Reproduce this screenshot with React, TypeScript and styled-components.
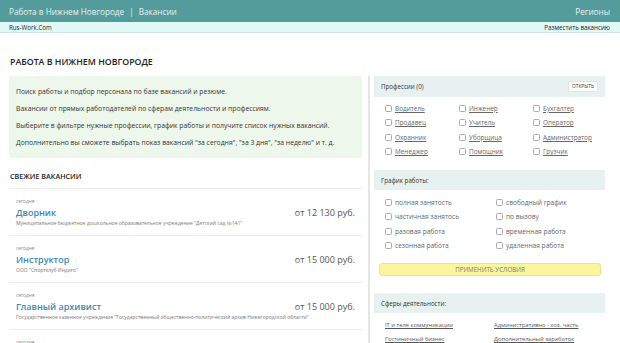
import React from "react";
import styled, { createGlobalStyle } from "styled-components";

const Global = createGlobalStyle`
  html, body { margin: 0; padding: 0; background: #fff; }
  body { font-family: "Open Sans", "Liberation Sans", sans-serif; color: #333; width: 620px; overflow: hidden; }
  * { box-sizing: border-box; }
`;

const TopBar = styled.header`
  height: 22px;
  background: #549c9b;
  display: flex;
  align-items: center;
  justify-content: space-between;
  padding: 0 10px 0 9px;
  color: #e4f2f1;
  font-size: 8.2px;
`;

const Brand = styled.div`
  display: flex;
  gap: 5px;
  align-items: center;
`;

const SubBar = styled.div`
  height: 11px;
  background: #e1f9f6;
  border-bottom: 1px solid #cde3e1;
  display: flex;
  align-items: center;
  justify-content: space-between;
  padding: 0 10px 0 9px;
  font-size: 6.2px;
  color: #222;
`;

const Page = styled.main`
  padding: 0 9px;
`;

const PageTitle = styled.h1`
  margin: 23px 0 8px 1px;
  font-size: 8.8px;
  line-height: 12px;
  font-weight: 600;
  color: #222;
`;

const Columns = styled.div`
  display: flex;
  align-items: flex-start;
`;

const LeftCol = styled.section`
  width: 353px;
  flex: none;
`;

const InfoBox = styled.div`
  background: #eef7eb;
  border-radius: 2px;
  padding: 7px 7px;
`;

const InfoLine = styled.p`
  margin: 0;
  font-size: 6.8px;
  line-height: 17px;
  color: #333;
`;

const SectionTitle = styled.h2`
  margin: 12px 0 0 0;
  padding: 0 0 6px 1px;
  font-size: 7.2px;
  line-height: 12px;
  font-weight: 600;
  color: #222;
  border-bottom: 1px solid #ececec;
`;

const Vacancy = styled.div`
  padding: 9px 7px 8px 7px;
  border-bottom: 1px solid #ececec;
`;

const VacDate = styled.div`
  font-size: 4.8px;
  line-height: 7px;
  color: #888;
`;

const VacRow = styled.div`
  display: flex;
  justify-content: space-between;
  align-items: center;
  height: 14px;
`;

const VacTitle = styled.a`
  font-size: 9px;
  font-weight: 600;
  color: #3d87b3;
  text-decoration: none;
`;

const Salary = styled.span`
  font-size: 9px;
  color: #555;
`;

const Company = styled.div`
  font-size: 5px;
  line-height: 8px;
  color: #777;
`;

const Separator = styled.div`
  width: 2px;
  align-self: stretch;
  background: #e6e6e6;
  margin-left: 6px;
  min-height: 300px;
`;

const Side = styled.aside`
  width: 231px;
  margin-left: 4px;
  flex: none;
`;

const PanelHead = styled.div<{ $h: number; $mt?: number }>`
  height: ${(p) => p.$h}px;
  margin-top: ${(p) => p.$mt ?? 0}px;
  background: #e6f1f0;
  display: flex;
  align-items: center;
  justify-content: space-between;
  padding: 0 7px;
  font-size: 6.2px;
  color: #333;
`;

const OpenBtn = styled.span`
  background: #fff;
  border: 1px solid #e2e2e2;
  border-radius: 2px;
  font-size: 4.8px;
  padding: 2px 3px;
  color: #333;
  line-height: 5px;
`;

const Grid = styled.div<{ $cols: string; $row: number; $pt: number; $pb: number }>`
  display: grid;
  grid-template-columns: ${(p) => p.$cols};
  grid-auto-rows: ${(p) => p.$row}px;
  padding: ${(p) => p.$pt}px 0 ${(p) => p.$pb}px 11px;
`;

const Check = styled.label<{ $link?: boolean }>`
  display: flex;
  align-items: center;
  gap: 3px;
  font-size: ${(p) => (p.$link ? 6.4 : 6.6)}px;
  color: #666;
  text-decoration: ${(p) => (p.$link ? "underline" : "none")};
  white-space: nowrap;
`;

const Box = styled.span`
  width: 7px;
  height: 7px;
  border: 1px solid #a8a8a8;
  border-radius: 1.5px;
  background: #fff;
  flex: none;
`;

const ApplyBtn = styled.div`
  margin: 10px 4px 0 5px;
  height: 13px;
  background: #fbf69d;
  border: 1px solid #ebe38c;
  border-radius: 3px;
  display: flex;
  align-items: center;
  justify-content: center;
  font-size: 6.2px;
  color: #777;
`;

const SphereLink = styled.a`
  font-size: 5.8px;
  color: #555;
  text-decoration: underline;
  display: flex;
  align-items: center;
  white-space: nowrap;
`;

const professions = [
  "Водитель", "Инженер", "Бухгалтер",
  "Продавец", "Учитель", "Оператор",
  "Охранник", "Уборщица", "Администратор",
  "Менеджер", "Помощник", "Грузчик",
];

const schedules = [
  "полная занятость", "свободный график",
  "частичная занятось", "по вызову",
  "разовая работа", "временная работа",
  "сезонная работа", "удаленная работа",
];

const spheres = [
  "IT и теле коммуникации", "Административно - хоз. часть",
  "Гостиничный бизнес", "Дополнительный заработок",
];

const vacancies = [
  { title: "Дворник", salary: "от 12 130 руб.", company: "Муниципальное бюджетное дошкольное образовательное учреждение \"Детский сад №141\"" },
  { title: "Инструктор", salary: "от 15 000 руб.", company: "ООО \"Спортклуб Индиго\"" },
  { title: "Главный архивист", salary: "от 15 000 руб.", company: "Государственное казенное учреждение \"Государственный общественно-политический архив Нижегородской области\"" },
  { title: "Кладовщик", salary: "от 20 000 руб.", company: "ООО \"Склад\"" },
];

export default function App() {
  return (
    <>
      <Global />
      <TopBar>
        <Brand>
          <span>Работа в Нижнем Новгороде</span>
          <span>|</span>
          <span>Вакансии</span>
        </Brand>
        <span>Регионы</span>
      </TopBar>
      <SubBar>
        <span>Rus-Work.Com</span>
        <span>Разместить вакансию</span>
      </SubBar>
      <Page>
        <PageTitle>РАБОТА В НИЖНЕМ НОВГОРОДЕ</PageTitle>
        <Columns>
          <LeftCol>
            <InfoBox>
              <InfoLine>Поиск работы и подбор персонала по базе вакансий и резюме.</InfoLine>
              <InfoLine>Вакансии от прямых работодателей по сферам деятельности и профессиям.</InfoLine>
              <InfoLine>Выберите в фильтре нужные профессии, график работы и получите список нужных вакансий.</InfoLine>
              <InfoLine>Дополнительно вы сможете выбрать показ вакансий "за сегодня", "за 3 дня", "за неделю" и т. д.</InfoLine>
            </InfoBox>
            <SectionTitle>СВЕЖИЕ ВАКАНСИИ</SectionTitle>
            {vacancies.map((v) => (
              <Vacancy key={v.title}>
                <VacDate>сегодня</VacDate>
                <VacRow>
                  <VacTitle href="#">{v.title}</VacTitle>
                  <Salary>{v.salary}</Salary>
                </VacRow>
                <Company>{v.company}</Company>
              </Vacancy>
            ))}
          </LeftCol>
          <Separator />
          <Side>
            <PanelHead $h={21}>
              <span>Профессии (0)</span>
              <OpenBtn>ОТКРЫТЬ</OpenBtn>
            </PanelHead>
            <Grid $cols="74px 74px 1fr" $row={14.5} $pt={4} $pb={11}>
              {professions.map((p) => (
                <Check key={p} $link>
                  <Box />
                  {p}
                </Check>
              ))}
            </Grid>
            <PanelHead $h={20}>
              <span>График работы:</span>
            </PanelHead>
            <Grid $cols="111px 1fr" $row={14.5} $pt={5} $pb={0}>
              {schedules.map((s) => (
                <Check key={s}>
                  <Box />
                  {s}
                </Check>
              ))}
            </Grid>
            <ApplyBtn>ПРИМЕНИТЬ УСЛОВИЯ</ApplyBtn>
            <PanelHead $h={20} $mt={17}>
              <span>Сферы деятельности:</span>
            </PanelHead>
            <Grid $cols="109px 1fr" $row={14} $pt={5} $pb={0}>
              {spheres.map((s) => (
                <SphereLink key={s} href="#">{s}</SphereLink>
              ))}
            </Grid>
          </Side>
        </Columns>
      </Page>
    </>
  );
}
